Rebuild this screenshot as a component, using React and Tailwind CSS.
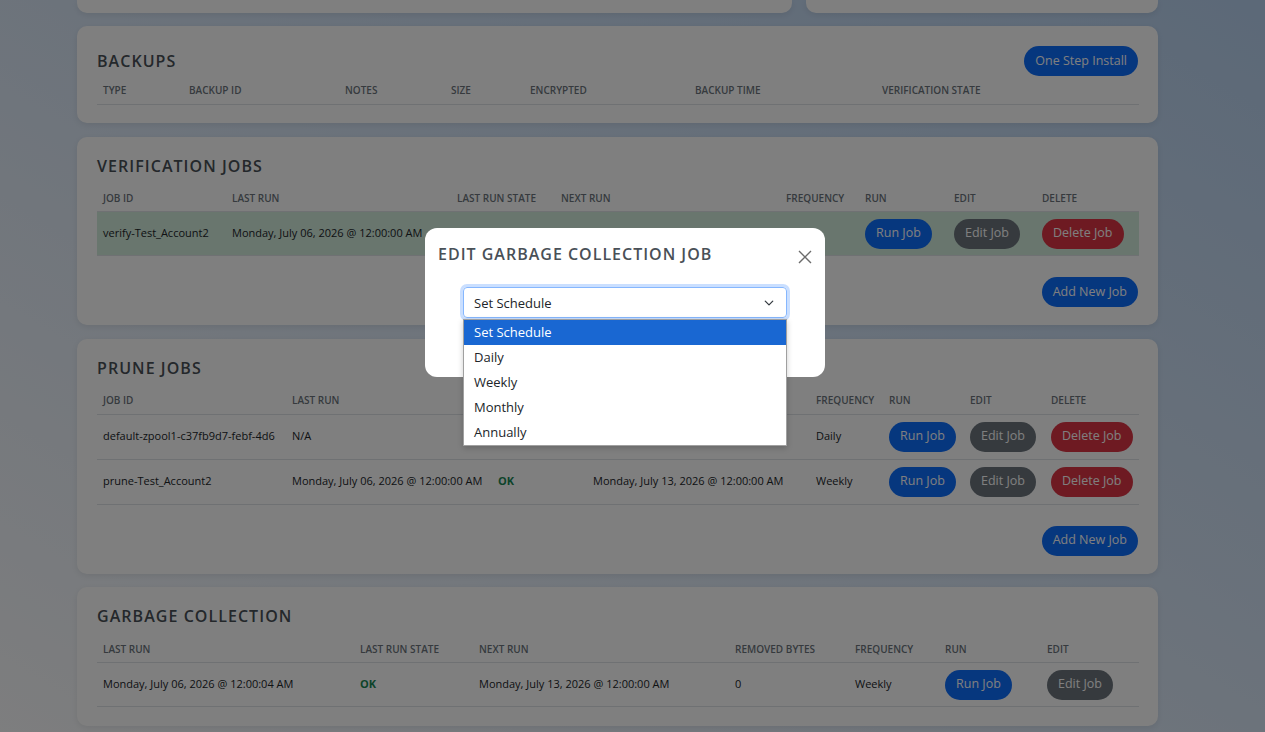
import React from 'react';

const font = { fontFamily: '"Open Sans", "Noto Sans", sans-serif' };

// Пилюля-кнопка
const Pill = ({ color, children }) => {
  const colors = {
    blue: 'bg-[#0d6efd]',
    gray: 'bg-[#6c757d]',
    red: 'bg-[#dc3545]',
  };
  return (
    <button className={`${colors[color]} h-[30px] rounded-full px-[11px] text-[12.5px] leading-none text-white whitespace-nowrap`}>
      {children}
    </button>
  );
};

const Card = ({ className = '', children }) => (
  <div className={`rounded-[10px] bg-white px-5 shadow-[0_2px_6px_rgba(0,0,0,0.08)] ${className}`}>{children}</div>
);

const Heading = ({ children }) => (
  <h2 className="text-[16px] font-semibold uppercase leading-[18px] tracking-[1.05px] text-[#495057]">{children}</h2>
);

const Table = ({ cols, rows, rowClass = '', highlight = -1 }) => (
  <table className="w-full table-fixed border-collapse text-left">
    <colgroup>
      {cols.map((c) => (
        <col key={c.label} style={{ width: c.w }} />
      ))}
    </colgroup>
    <thead>
      <tr className="h-[27px] border-b border-[#dee2e6]">
        {cols.map((c) => (
          <th key={c.label} className="px-1.5 pt-px text-[10px] font-semibold uppercase text-[#6c757d] whitespace-nowrap">
            {c.label}
          </th>
        ))}
      </tr>
    </thead>
    <tbody>
      {rows.map((r, i) => (
        <tr key={i} className={`border-b border-[#dee2e6] ${rowClass} ${i === highlight ? 'bg-[#d3ecdd]' : ''}`}>
          {r.map((cell, j) => (
            <td key={j} className="px-1.5 text-[11px] text-[#212529] whitespace-nowrap overflow-hidden">
              {cell}
            </td>
          ))}
        </tr>
      ))}
    </tbody>
  </table>
);

const Ok = () => <span className="font-bold text-[#198754]">OK</span>;

export default function App() {
  const date06 = 'Monday, July 06, 2026 @ 12:00:00 AM';
  const date13 = 'Monday, July 13, 2026 @ 12:00:00 AM';

  return (
    <div className="relative min-h-screen overflow-hidden bg-linear-to-tr from-[#fdfdfe] to-[#b8d2f0]" style={font}>
      <div className="ml-[77px] w-[1081px] pb-10">
        {/* Обрезанные карточки сверху */}
        <div className="flex gap-[14px]">
          <div className="h-[13px] flex-1 rounded-b-[10px] bg-white shadow-[0_2px_6px_rgba(0,0,0,0.08)]" />
          <div className="h-[13px] w-[352px] rounded-b-[10px] bg-white shadow-[0_2px_6px_rgba(0,0,0,0.08)]" />
        </div>

        {/* Backups */}
        <Card className="mt-[13px] pt-5 pb-[18px]">
          <div className="mb-px flex h-[30px] items-center justify-between">
            <Heading>Backups</Heading>
            <Pill color="blue">One Step Install</Pill>
          </div>
          <Table
            cols={[
              { label: 'Type', w: 86 },
              { label: 'Backup ID', w: 156 },
              { label: 'Notes', w: 106 },
              { label: 'Size', w: 79 },
              { label: 'Encrypted', w: 165 },
              { label: 'Backup Time', w: 187 },
              { label: 'Verification State', w: 263 },
            ]}
            rows={[]}
          />
        </Card>

        {/* Verification jobs */}
        <Card className="mt-[14px] pt-5 pb-[18px]">
          <div className="mb-[10px]">
            <Heading>Verification Jobs</Heading>
          </div>
          <Table
            cols={[
              { label: 'Job ID', w: 129 },
              { label: 'Last Run', w: 225 },
              { label: 'Last Run State', w: 104 },
              { label: 'Next Run', w: 225 },
              { label: 'Frequency', w: 79 },
              { label: 'Run', w: 89 },
              { label: 'Edit', w: 88 },
              { label: 'Delete', w: 103 },
            ]}
            rowClass="h-[44px]"
            highlight={0}
            rows={[
              [
                'verify-Test_Account2',
                date06,
                '',
                '',
                '',
                <Pill color="blue">Run Job</Pill>,
                <Pill color="gray">Edit Job</Pill>,
                <Pill color="red">Delete Job</Pill>,
              ],
            ]}
          />
          <div className="mt-[21px] flex justify-end">
            <Pill color="blue">Add New Job</Pill>
          </div>
        </Card>

        {/* Prune jobs */}
        <Card className="mt-[14px] pt-5 pb-[18px]">
          <div className="mb-[10px]">
            <Heading>Prune Jobs</Heading>
          </div>
          <Table
            cols={[
              { label: 'Job ID', w: 189 },
              { label: 'Last Run', w: 206 },
              { label: 'Last Run State', w: 95 },
              { label: 'Next Run', w: 223 },
              { label: 'Frequency', w: 73 },
              { label: 'Run', w: 81 },
              { label: 'Edit', w: 81 },
              { label: 'Delete', w: 94 },
            ]}
            rowClass="h-[45px]"
            rows={[
              [
                'default-zpool1-c37fb9d7-febf-4d6',
                'N/A',
                '',
                date13,
                'Daily',
                <Pill color="blue">Run Job</Pill>,
                <Pill color="gray">Edit Job</Pill>,
                <Pill color="red">Delete Job</Pill>,
              ],
              [
                'prune-Test_Account2',
                date06,
                <Ok />,
                date13,
                'Weekly',
                <Pill color="blue">Run Job</Pill>,
                <Pill color="gray">Edit Job</Pill>,
                <Pill color="red">Delete Job</Pill>,
              ],
            ]}
          />
          <div className="mt-[21px] flex justify-end">
            <Pill color="blue">Add New Job</Pill>
          </div>
        </Card>

        {/* Garbage collection */}
        <Card className="mt-[13px] pt-5 pb-[19px]">
          <div className="mb-[11px]">
            <Heading>Garbage Collection</Heading>
          </div>
          <Table
            cols={[
              { label: 'Last Run', w: 257 },
              { label: 'Last Run State', w: 119 },
              { label: 'Next Run', w: 256 },
              { label: 'Removed Bytes', w: 120 },
              { label: 'Frequency', w: 90 },
              { label: 'Run', w: 102 },
              { label: 'Edit', w: 98 },
            ]}
            rowClass="h-[44px]"
            rows={[
              [
                'Monday, July 06, 2026 @ 12:00:04 AM',
                <Ok />,
                date13,
                '0',
                'Weekly',
                <Pill color="blue">Run Job</Pill>,
                <Pill color="gray">Edit Job</Pill>,
              ],
            ]}
          />
        </Card>
      </div>

      {/* Затемнение */}
      <div className="absolute inset-0 bg-black/50" />

      {/* Модальное окно */}
      <div className="absolute left-[425px] top-[228px] h-[149px] w-[400px] rounded-[12px] bg-white">
        <div className="flex items-start justify-between pl-[13px] pr-[12px] pt-[17px]">
          <h3 className="text-[16px] font-semibold uppercase leading-[18px] tracking-[1px] text-[#495057]">
            Edit Garbage Collection Job
          </h3>
          <svg width="16" height="16" viewBox="0 0 16 16" className="mt-[4px]" fill="none" stroke="#6b6b6b" strokeWidth="1.4">
            <path d="M2 2l12 12M14 2L2 14" />
          </svg>
        </div>
        <div className="mx-[38px] mt-[22px] flex h-[31px] items-center justify-between rounded-[4px] border border-[#86b7fe] pl-[10px] pr-[12px] text-[13px] text-[#212529] shadow-[0_0_0_3px_rgba(13,110,253,0.22)]">
          <span className="pt-[2px]">Set Schedule</span>
          <svg width="10" height="10" viewBox="0 0 16 16" fill="none" stroke="#343a40" strokeWidth="2" strokeLinecap="round" strokeLinejoin="round">
            <path d="M2 5l6 6 6-6" />
          </svg>
        </div>
      </div>

      {/* Раскрытый список */}
      <div className="absolute left-[463px] top-[319px] w-[324px] border border-[#a0a0a0] bg-white text-[13px] text-[#212529] shadow-[0_2px_6px_rgba(0,0,0,0.2)]">
        {['Set Schedule', 'Daily', 'Weekly', 'Monthly', 'Annually'].map((o, i) => (
          <div key={o} className={`flex h-[25px] items-center px-[10px] ${i === 0 ? 'bg-[#1967d2] text-white' : ''}`}>
            {o}
          </div>
        ))}
      </div>
    </div>
  );
}
